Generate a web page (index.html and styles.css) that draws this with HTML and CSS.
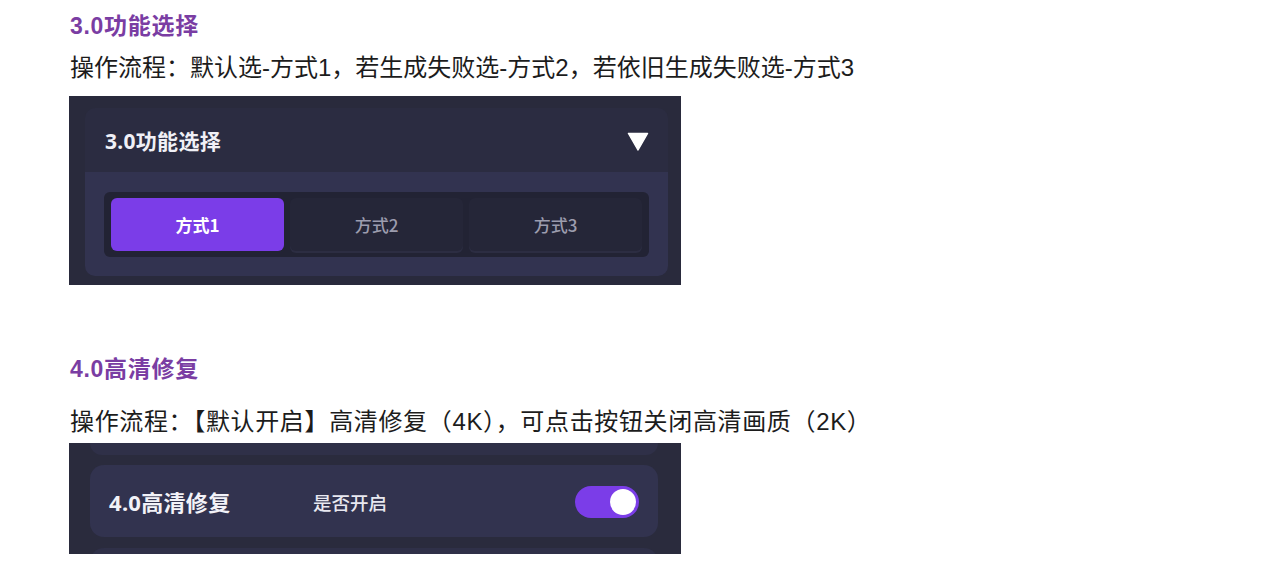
FILE: index.html
```html
<!DOCTYPE html>
<html lang="zh">
<head>
<meta charset="utf-8">
<title>功能说明</title>
<link rel="stylesheet" href="styles.css">
</head>
<body>
<section class="sec sec-first">
  <h2 class="sec-title">3.0功能选择</h2>
  <p class="sec-text">操作流程：默认选-方式1，若生成失败选-方式2，若依旧生成失败选-方式3</p>
  <div class="shot shot-mode">
    <div class="panel">
      <div class="panel-head">
        <span class="panel-title">3.0功能选择</span>
        <svg class="caret" width="22" height="19" viewBox="0 0 22 19"><path d="M1.5 1.5 H20.5 L11 18 Z" fill="#ffffff" stroke="#ffffff" stroke-width="1.5" stroke-linejoin="round"/></svg>
      </div>
      <div class="panel-body">
        <div class="segmented">
          <button class="seg seg-active">方式1</button>
          <button class="seg">方式2</button>
          <button class="seg">方式3</button>
        </div>
      </div>
    </div>
  </div>
</section>
<section class="sec sec-second">
  <h2 class="sec-title">4.0高清修复</h2>
  <p class="sec-text sec-text-2">操作流程：【默认开启】高清修复（4K），可点击按钮关闭高清画质（2K）</p>
  <div class="shot shot-hd">
    <div class="row-frag row-frag-top"></div>
    <div class="row-card">
      <span class="row-title">4.0高清修复</span>
      <span class="row-label">是否开启</span>
      <span class="toggle"><span class="knob"></span></span>
    </div>
    <div class="row-frag row-frag-bottom"></div>
  </div>
</section>
</body>
</html>
```
FILE: styles.css
```css
html, body {
  margin: 0;
  padding: 0;
  background: #ffffff;
}
body {
  padding: 11px 0 0 70px;
  font-family: "Liberation Sans", "Noto Sans CJK SC", sans-serif;
  color: #1a1a1a;
}
.sec-title {
  margin: 0;
  font-size: 23px;
  line-height: 30px;
  font-weight: 700;
  color: #7a3da3;
  letter-spacing: 0.7px;
}
.sec-text {
  margin: 11px 0 12px;
  font-size: 24px;
  line-height: 32px;
  font-weight: 400;
  color: #1c1c1c;
  letter-spacing: 0;
}
.sec-second {
  margin-top: 69px;
}
.sec-text-2 {
  margin: 22px 0 5px;
  letter-spacing: 0.65px;
}
.shot {
  width: 612px;
  margin-left: -1px;
  box-sizing: border-box;
  font-family: "Noto Sans CJK SC", "Noto Sans", sans-serif;
}
.shot-mode {
  height: 189px;
  background: #292a3c;
  padding: 12px 13px 9px 16px;
}
.panel {
  height: 168px;
  border-radius: 10px;
  overflow: hidden;
  display: flex;
  flex-direction: column;
}
.panel-head {
  height: 64px;
  flex: none;
  background: #2b2c41;
  display: flex;
  align-items: center;
  justify-content: space-between;
  padding: 0 19px 0 20px;
}
.panel-title {
  font-family: "Noto Sans", "Noto Sans CJK SC", sans-serif;
  font-size: 21px;
  font-weight: 700;
  color: #f0f0f6;
  letter-spacing: 0.3px;
}
.caret {
  display: block;
  margin-top: 3px;
}
.panel-body {
  flex: 1;
  background: #323350;
  padding: 20px 19px 0 19px;
}
.segmented {
  height: 65px;
  box-sizing: border-box;
  background: #222334;
  border-radius: 6px;
  padding: 6px 7px;
  display: grid;
  grid-template-columns: 1fr 1fr 1fr;
  gap: 6px;
}
.seg {
  border: none;
  margin: 0;
  border-radius: 6px;
  background: #252638;
  box-shadow: 0 2px 0 #2c2d42;
  font-family: "Noto Sans CJK SC", sans-serif;
  font-size: 17px;
  font-weight: 500;
  color: #9c9cae;
  padding: 0;
}
.seg-active {
  background: #7b3de8;
  box-shadow: none;
  color: #ffffff;
  font-weight: 700;
}
.shot-hd {
  height: 111px;
  background: #2a2b3d;
  padding: 0 23px 0 21px;
  overflow: hidden;
  display: flex;
  flex-direction: column;
  gap: 10px;
}
.row-frag {
  flex: none;
  background: #2f3048;
}
.row-frag-top {
  height: 12px;
  border-radius: 0 0 14px 14px;
}
.row-frag-bottom {
  height: 20px;
  margin-top: 1px;
  border-radius: 14px 14px 0 0;
}
.row-card {
  flex: none;
  height: 72px;
  background: #32334f;
  border-radius: 14px;
  display: flex;
  align-items: center;
  padding: 0 19px 0 19px;
}
.row-title {
  width: 204px;
  font-family: "Noto Sans", "Noto Sans CJK SC", sans-serif;
  font-size: 22px;
  font-weight: 700;
  color: #f2f2f8;
  letter-spacing: 0.3px;
}
.row-label {
  font-size: 18.5px;
  font-weight: 500;
  color: #e8e8f0;
  margin-right: auto;
  margin-top: 2px;
}
.toggle {
  width: 64px;
  height: 32px;
  border-radius: 16px;
  background: #7b3de8;
  position: relative;
  margin-top: 1px;
}
.knob {
  position: absolute;
  right: 3px;
  top: 3px;
  width: 26px;
  height: 26px;
  border-radius: 50%;
  background: #ffffff;
}
```
